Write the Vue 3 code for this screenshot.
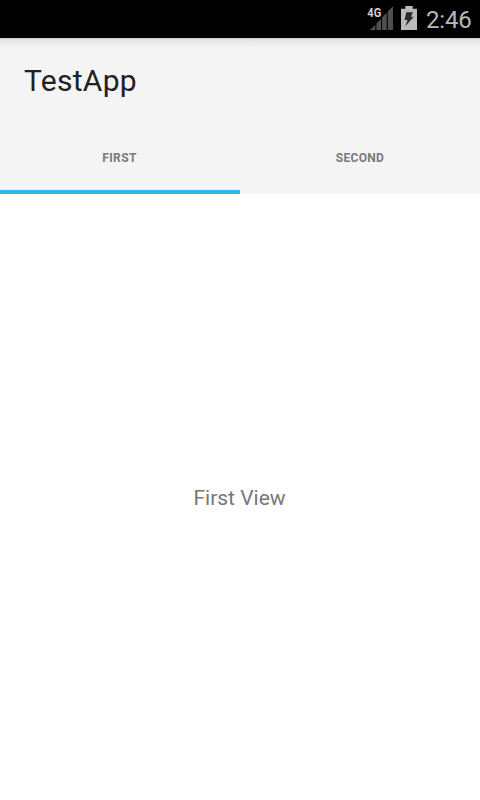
<script setup>
import { ref } from 'vue'

const tabs = [
  { label: 'First', view: 'First View' },
  { label: 'Second', view: 'Second View' },
]
const active = ref(0)
</script>

<template>
  <div class="screen">
    <header class="status">
      <svg class="signal" width="28" height="28" viewBox="0 0 28 28">
        <path d="M3 26 8.3 20.8V26ZM9.4 19.4 14 14.9V26H9.4ZM15.1 13.2 19.7 8.8V26H15.1ZM20.8 7.3 26 2.3V26H20.8Z" fill="#4f4f4f" />
        <text transform="translate(0.3 13.3) scale(0.82 1)">4G</text>
      </svg>
      <svg class="battery" width="16" height="24" viewBox="0 0 16 24">
        <path d="M4.3 0h7.4v2.7H16V24H0V2.7h4.3Z" fill="#bababa" />
        <path d="M5.3 6.2H12L9.8 10.7H12.8L4.3 20.3 6.5 13.9H3.6Z" fill="#292929" />
      </svg>
      <span class="clock">2:46</span>
    </header>
    <div class="bar"><h1>TestApp</h1></div>
    <nav class="tabs">
      <button
        v-for="(tab, i) in tabs"
        :key="tab.label"
        :class="['tab', { active: i === active }]"
        @click="active = i"
      ><span>{{ tab.label }}</span></button>
    </nav>
    <main class="content">{{ tabs[active].view }}</main>
  </div>
</template>

<style>
body {
  margin: 0;
  background: #fff;
}
</style>

<style scoped>
.screen {
  display: flex;
  flex-direction: column;
  width: 480px;
  height: 800px;
  overflow: hidden;
  background: #fff;
  font-family: Roboto, sans-serif;
}
.status {
  box-sizing: border-box;
  display: flex;
  flex: none;
  justify-content: flex-end;
  height: 38px;
  padding: 0 8px 0 0;
  background: #000;
}
.signal {
  margin: 4px 6px 0 0;
}
.signal text {
  fill: #d0d0d0;
  font-size: 13.5px;
  font-weight: 700;
}
.battery {
  margin: 6px 9px 0 0;
}
.clock {
  width: 46px;
  color: #b8b8b8;
  font-size: 24px;
  letter-spacing: -0.2px;
  line-height: 40px;
}
.bar {
  display: flex;
  flex: none;
  align-items: center;
  box-sizing: border-box;
  height: 84px;
  padding: 2px 0 0 24px;
  background: linear-gradient(#c8c8c8 0, #e5e5e5 2px, #eeeeee 6px, #f4f4f4 12px);
}
h1 {
  margin: 0;
  color: #212121;
  font-size: 30px;
  font-weight: 400;
  line-height: 36px;
  letter-spacing: 0.3px;
}
.tabs {
  display: flex;
  flex: none;
  height: 72px;
  background: #f4f4f4;
}
.tab {
  box-sizing: border-box;
  width: 50%;
  padding: 3px 0 0;
  border: 0;
  border-bottom: 4px solid transparent;
  background: none;
  color: #7a7a7a;
  font: 700 12px/16px Roboto, sans-serif;
  letter-spacing: 0.3px;
  text-transform: uppercase;
}
.tab.active {
  padding-right: 1px;
  border-bottom-color: #33b5e5;
  letter-spacing: 0.4px;
}
.content {
  display: flex;
  flex: 1;
  align-items: center;
  justify-content: center;
  padding: 2px 1px 0 0;
  color: #777;
  font-size: 21px;
}
</style>
